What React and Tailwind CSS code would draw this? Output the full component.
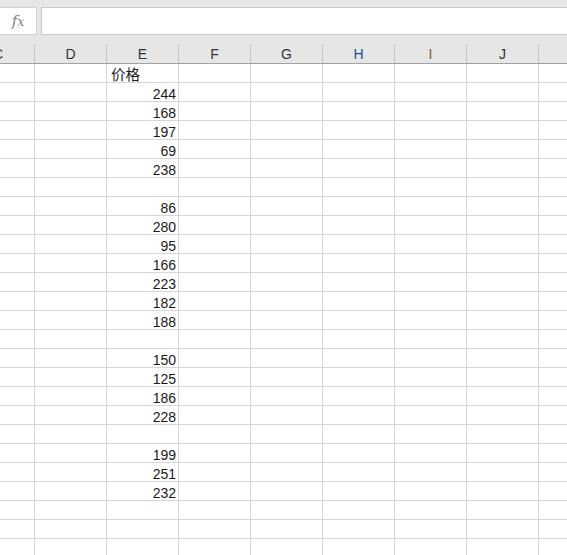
const columns = ['D', 'E', 'F', 'G', 'H', 'I', 'J'];

const headerColor = {
  H: 'text-[#22508f]',
  I: 'text-[#8a5a16]',
};

const values = [
  '价格', '244', '168', '197', '69', '238', '', '86', '280', '95', '166', '223', '182', '188', '',
  '150', '125', '186', '228', '', '199', '251', '232', '', '', '',
];

const Cell = ({ children, className = '' }) => (
  <div className={`h-full w-[72px] shrink-0 border-r border-[#d6d6d6] flex items-end ${className}`}>
    {children}
  </div>
);

const App = () => {
  return (
    <div className="w-[567px] h-[555px] overflow-hidden bg-white text-[14px] text-[#1a1a1a]" style={{ fontFamily: '"Liberation Sans", "Noto Sans CJK SC", sans-serif' }}>
      {/* formula bar */}
      <div className="bg-[#e6e6e6] pt-[7px] pb-[9px] flex gap-[4px]">
        <div className="w-[37px] h-[28px] bg-white border border-[#d2d2d2] border-l-0 flex items-center justify-center">
          <span className="italic text-[#808080] text-[15px] leading-none" style={{ fontFamily: '"DejaVu Serif", "Liberation Serif", serif' }}>
            f<span className="text-[12px]">x</span>
          </span>
        </div>
        <div className="flex-1 h-[28px] bg-white border border-[#cbcbcb] border-r-0" />
      </div>

      {/* column headers */}
      <div className="flex h-[20px] bg-[#e6e6e6] border-b border-[#a3a3a3] text-[#333]">
        <div className="w-[35px] shrink-0 h-full border-r border-[#c8c8c8] overflow-hidden flex items-end">
          <div className="w-[72px] shrink-0 -ml-[38px] text-center leading-[14px] pb-[2px]">C</div>
        </div>
        {columns.map((col) => (
          <div key={col} className="w-[72px] shrink-0 h-full border-r border-[#c8c8c8] flex items-end justify-center">
            <span className={`leading-[14px] pb-[2px] ${headerColor[col] || ''}`}>{col}</span>
          </div>
        ))}
        <div className="flex-1" />
      </div>

      {/* rows */}
      {values.map((val, i) => (
        <div key={i} className="flex h-[19px] border-b border-[#d6d6d6]">
          <div className="w-[35px] shrink-0 h-full border-r border-[#d6d6d6]" />
          <Cell />
          <Cell className={i === 0 ? 'justify-start pl-[4px]' : 'justify-end pr-[2px]'}>
            {i === 0 ? (
              <span className="leading-[17px] text-[14.5px]" style={{ fontFamily: '"Noto Sans CJK SC", sans-serif' }}>{val}</span>
            ) : (
              <span className="leading-[14px]">{val}</span>
            )}
          </Cell>
          <Cell />
          <Cell />
          <Cell />
          <Cell />
          <Cell />
          <div className="flex-1" />
        </div>
      ))}
    </div>
  );
};

export default App;
